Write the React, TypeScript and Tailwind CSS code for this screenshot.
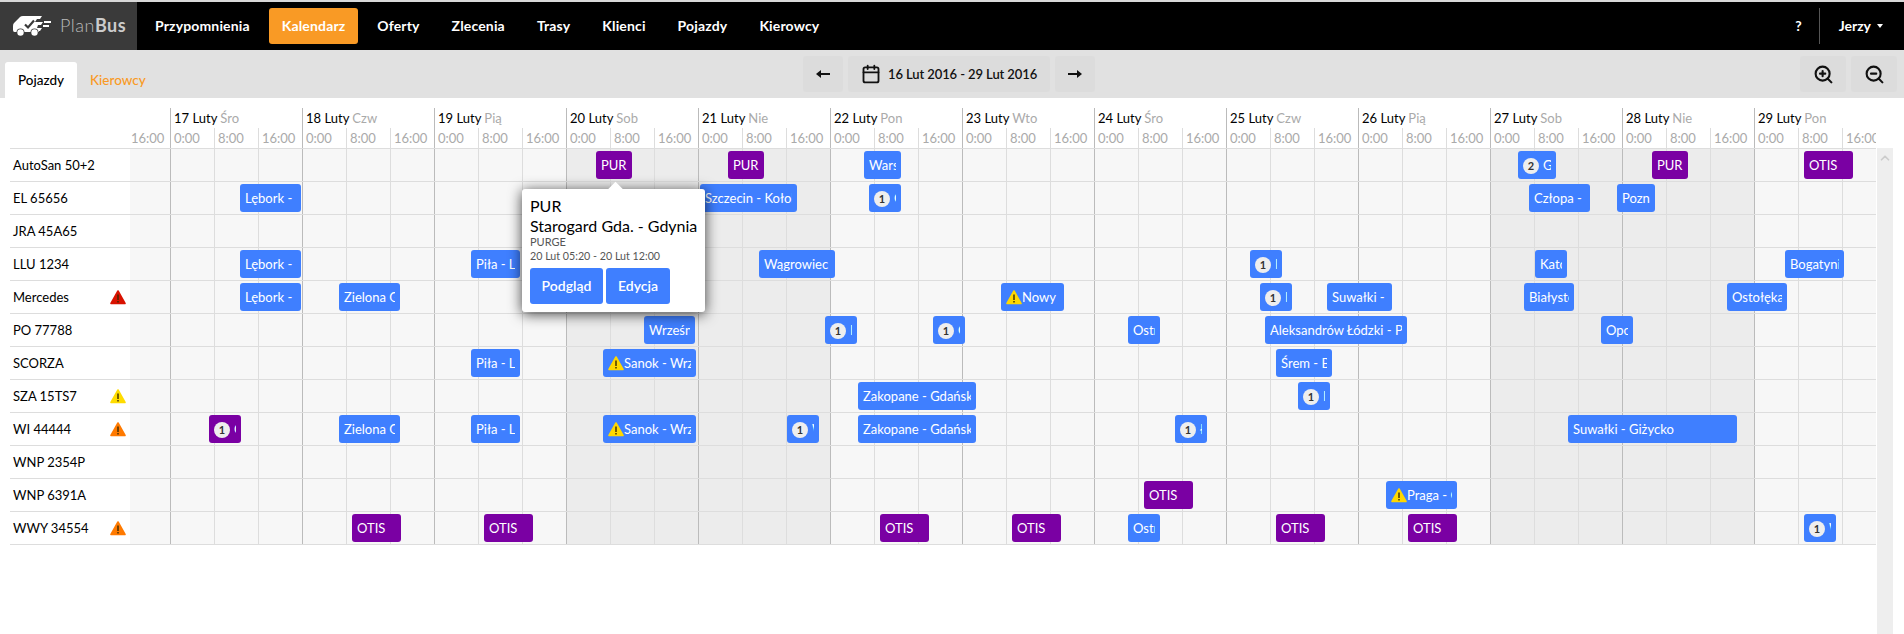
import React from 'react';
import { Calendar, ChevronUp, ZoomIn, ZoomOut } from 'lucide-react';

type Bar = {
    x: number;
    w: number;
    label: string;
    purple?: boolean;
    badge?: number;
    warn?: boolean;
};

const TRACK_START = 130;

const navItems = ['Przypomnienia', 'Kalendarz', 'Oferty', 'Zlecenia', 'Trasy', 'Klienci', 'Pojazdy', 'Kierowcy'];

const days = [
    { day: 17, name: 'Śro' },
    { day: 18, name: 'Czw' },
    { day: 19, name: 'Pią' },
    { day: 20, name: 'Sob', weekend: true },
    { day: 21, name: 'Nie', weekend: true },
    { day: 22, name: 'Pon' },
    { day: 23, name: 'Wto' },
    { day: 24, name: 'Śro' },
    { day: 25, name: 'Czw' },
    { day: 26, name: 'Pią' },
    { day: 27, name: 'Sob', weekend: true },
    { day: 28, name: 'Nie', weekend: true },
    { day: 29, name: 'Pon' },
];

const otis = (x: number): Bar => ({ x, w: 49, label: 'OTIS', purple: true });
const pur = (x: number): Bar => ({ x, w: 36, label: 'PUR', purple: true });

const vehicles: { name: string; alert?: string; bars: Bar[] }[] = [
    {
        name: 'AutoSan 50+2',
        bars: [
            pur(596),
            pur(728),
            { x: 864, w: 37, label: 'Warszawa' },
            { x: 1518, w: 38, label: 'Gdynia', badge: 2 },
            pur(1652),
            otis(1804),
        ],
    },
    {
        name: 'EL 65656',
        bars: [
            { x: 240, w: 61, label: 'Lębork - Poznań' },
            { x: 700, w: 97, label: 'Szczecin - Kołobrzeg' },
            { x: 869, w: 32, label: 'Opole', badge: 1 },
            { x: 1529, w: 61, label: 'Człopa - Gniezno' },
            { x: 1617, w: 38, label: 'Poznań' },
        ],
    },
    { name: 'JRA 45A65', bars: [] },
    {
        name: 'LLU 1234',
        bars: [
            { x: 240, w: 61, label: 'Lębork - Poznań' },
            { x: 471, w: 49, label: 'Piła - Lublin' },
            { x: 759, w: 76, label: 'Wągrowiec' },
            { x: 1250, w: 32, label: 'Poznań', badge: 1 },
            { x: 1535, w: 32, label: 'Katowice' },
            { x: 1785, w: 59, label: 'Bogatynia' },
        ],
    },
    {
        name: 'Mercedes',
        alert: '#d91200',
        bars: [
            { x: 240, w: 61, label: 'Lębork - Poznań' },
            { x: 339, w: 61, label: 'Zielona Góra' },
            { x: 1001, w: 63, label: 'Nowy', warn: true },
            { x: 1260, w: 32, label: 'Poznań', badge: 1 },
            { x: 1327, w: 65, label: 'Suwałki - Giżycko' },
            { x: 1524, w: 50, label: 'Białystok' },
            { x: 1727, w: 60, label: 'Ostołęka' },
        ],
    },
    {
        name: 'PO 77788',
        bars: [
            { x: 644, w: 51, label: 'Września' },
            { x: 825, w: 32, label: 'Poznań', badge: 1 },
            { x: 933, w: 32, label: 'Opole', badge: 1 },
            { x: 1128, w: 32, label: 'Ostrów' },
            { x: 1265, w: 142, label: 'Aleksandrów Łódzki - Płock' },
            { x: 1601, w: 32, label: 'Opole' },
        ],
    },
    {
        name: 'SCORZA',
        bars: [
            { x: 471, w: 49, label: 'Piła - Lublin' },
            { x: 603, w: 93, label: 'Sanok - Wrzeszcz', warn: true },
            { x: 1276, w: 56, label: 'Śrem - Bytom' },
        ],
    },
    {
        name: 'SZA 15TS7',
        alert: '#ffdc00',
        bars: [
            { x: 858, w: 118, label: 'Zakopane - Gdańsk' },
            { x: 1298, w: 32, label: 'Legnica', badge: 1 },
        ],
    },
    {
        name: 'WI 44444',
        alert: '#ff7a00',
        bars: [
            { x: 209, w: 32, label: 'Opole', badge: 1, purple: true },
            { x: 339, w: 61, label: 'Zielona Góra' },
            { x: 471, w: 49, label: 'Piła - Lublin' },
            { x: 603, w: 93, label: 'Sanok - Wrzeszcz', warn: true },
            { x: 787, w: 32, label: 'Wrocław', badge: 1 },
            { x: 858, w: 118, label: 'Zakopane - Gdańsk' },
            { x: 1175, w: 32, label: 'Łódź', badge: 1 },
            { x: 1568, w: 169, label: 'Suwałki - Giżycko' },
        ],
    },
    { name: 'WNP 2354P', bars: [] },
    {
        name: 'WNP 6391A',
        bars: [otis(1144), { x: 1386, w: 71, label: 'Praga - Gdańsk', warn: true }],
    },
    {
        name: 'WWY 34554',
        alert: '#ff7a00',
        bars: [
            otis(352),
            otis(484),
            otis(880),
            otis(1012),
            { x: 1128, w: 32, label: 'Ostrów' },
            otis(1276),
            otis(1408),
            { x: 1804, w: 32, label: 'Wrocław', badge: 1 },
        ],
    },
];

const WarnIcon: React.FC<{ color: string }> = ({ color }) => (
    <svg width="16" height="15" viewBox="0 0 16 15" className="shrink-0">
        <path d="M8 1 L15 13.5 H1 Z" fill={color} stroke={color} strokeWidth="1.6" strokeLinejoin="round" />
        <rect x="7.3" y="4.5" width="1.4" height="5.5" fill="#3a2a00" />
        <rect x="7.3" y="11" width="1.4" height="1.5" fill="#3a2a00" />
    </svg>
);

const Logo: React.FC = () => (
    <svg width="38" height="21" viewBox="0 0 38 21" fill="#fff">
        <path d="M7 1 Q8 0 10 0 H29 L27 3 H24 L22 6 H30 L28 9 H25 L24 12 H29 L27 15 H26 V16 H1.5 Q0 16 0 14 V10 Q0 8 1 7 Z" />
        <circle cx="7.5" cy="16.5" r="4" fill="#3a3a3a" />
        <circle cx="21.5" cy="16.5" r="4" fill="#3a3a3a" />
        <circle cx="7.5" cy="16.5" r="3.2" />
        <circle cx="21.5" cy="16.5" r="3.2" />
        <rect x="31" y="5" width="7" height="2" />
        <rect x="30" y="9" width="6" height="2" />
        <path d="M12 8.5 L15 11.5 L21 4.5" fill="none" stroke="#3a3a3a" strokeWidth="2.2" />
    </svg>
);

const Arrow: React.FC<{ flip?: boolean }> = ({ flip }) => (
    <svg width="14" height="10" viewBox="0 0 14 10" className={flip ? 'rotate-180' : ''}>
        <path d="M0 5 L5 1 V4 H14 V6 H5 V9 Z" fill="#111" />
    </svg>
);

const EventBar: React.FC<{ bar: Bar }> = ({ bar }) => (
    <div
        className={`absolute top-[2px] h-7 rounded-[3px] px-[5px] flex items-center text-white text-[13px] ${bar.purple ? 'bg-[#7a00a3]' : 'bg-[#3f7fff]'}`}
        style={{ left: bar.x - TRACK_START, width: bar.w }}
    >
        <div className="flex items-center w-full overflow-hidden whitespace-nowrap">
            {bar.badge && (
                <span className="shrink-0 w-4 h-4 mt-[1px] mr-1 rounded-full bg-[#eeeeee] text-[#333] text-[11px] font-bold leading-4 text-center">
                    {bar.badge}
                </span>
            )}
            {bar.warn && <WarnIcon color="#ffd800" />}
            <span>{bar.label}</span>
        </div>
    </div>
);

const TrackCells: React.FC = () => (
    <>
        <div className="w-10 shrink-0 bg-[#f7f7f7]" />
        {days.map(d => (
            <div key={d.day} className={`w-[132px] shrink-0 flex ${d.weekend ? 'bg-[#ececec]' : 'bg-[#f7f7f7]'}`}>
                <div className="w-11 border-l border-[#bbbbbb]" />
                <div className="w-11 border-l border-[#dddddd]" />
                <div className="w-11 border-l border-[#dddddd]" />
            </div>
        ))}
    </>
);

export default function App() {
    return (
        <div className="relative h-[634px] w-[1904px] overflow-hidden bg-white text-sm text-[#111] font-['Lato','Open_Sans',sans-serif]">
            <div className="h-[2px] bg-[#d8d8d8]" />

            {/* top nav */}
            <div className="h-12 bg-black flex items-center text-white font-bold">
                <div className="w-[137px] h-12 bg-[#3a3a3a] flex items-center pl-[13px] gap-[9px]">
                    <Logo />
                    <span className="text-[18px] text-[#bbbbbb] font-light tracking-[0.5px]">
                        Plan<span className="font-bold text-[#cccccc]">Bus</span>
                    </span>
                </div>
                <nav className="flex items-center gap-[6px] ml-[5px] tracking-[0.15px]">
                    {navItems.map(item => (
                        <a
                            key={item}
                            className={`h-9 px-[13px] rounded-[3px] leading-9 ${item === 'Kalendarz' ? 'bg-[#f99a25]' : ''}`}
                        >
                            {item}
                        </a>
                    ))}
                </nav>
                <div className="ml-auto flex items-center">
                    <span className="mr-[17px]">?</span>
                    <div className="h-9 w-px bg-[#555555]" />
                    <span className="ml-[19px]">Jerzy</span>
                    <span className="ml-[6px] mr-[21px] border-x-[3px] border-t-4 border-x-transparent border-t-white" />
                </div>
            </div>

            {/* toolbar */}
            <div className="h-12 bg-[#e1e1e1] flex">
                <div className="w-[803px] pl-[5px] flex items-end">
                    <div className="h-9 w-[72px] bg-white rounded-t-[3px] text-center leading-9 font-medium text-[13.5px] text-black">Pojazdy</div>
                    <div className="h-9 pl-[13px] leading-9 font-medium text-[13.5px] text-[#f99a25]">Kierowcy</div>
                </div>
                <div className="flex gap-[5px] pt-[6px]">
                    <button className="w-10 h-9 rounded-[3px] bg-[#dcdcdc] flex items-center justify-center"><Arrow /></button>
                    <div className="w-[202px] h-9 rounded-[3px] bg-[#dcdcdc] flex items-center pl-[13px] gap-[7px] font-semibold text-[13px] tracking-[-0.1px] text-[#111] whitespace-nowrap">
                        <Calendar size={20} strokeWidth={2.2} className="shrink-0" />
                        16 Lut 2016 - 29 Lut 2016
                    </div>
                    <button className="w-10 h-9 rounded-[3px] bg-[#dcdcdc] flex items-center justify-center"><Arrow flip /></button>
                </div>
                <div className="ml-auto mr-[7px] flex gap-[5px] pt-[6px]">
                    <button className="w-[46px] h-9 rounded-[3px] bg-[#dcdcdc] flex items-center justify-center"><ZoomIn size={21} strokeWidth={2.4} /></button>
                    <button className="w-[46px] h-9 rounded-[3px] bg-[#dcdcdc] flex items-center justify-center"><ZoomOut size={21} strokeWidth={2.4} /></button>
                </div>
            </div>

            {/* date header */}
            <div className="ml-[10px] w-[1866px] h-[51px] border-b border-[#dddddd] flex leading-5 text-[13px]">
                <div className="w-[120px] shrink-0" />
                <div className="flex overflow-hidden">
                    <div className="w-10 shrink-0 self-end h-5 text-[#aaaaaa] pl-[1px]">16:00</div>
                    {days.map(d => (
                        <div key={d.day} className="w-[132px] shrink-0 mt-[10px] border-l border-[#bbbbbb]">
                            <div className="h-5 pl-[3px] whitespace-nowrap text-black">
                                {d.day} Luty <span className="text-[#aaaaaa]">{d.name}</span>
                            </div>
                            <div className="flex text-[#aaaaaa]">
                                <div className="w-[43px] pl-[3px]">0:00</div>
                                <div className="w-11 pl-[3px] border-l border-[#dddddd]">8:00</div>
                                <div className="w-11 pl-[3px] border-l border-[#dddddd] whitespace-nowrap">16:00</div>
                            </div>
                        </div>
                    ))}
                </div>
            </div>

            {/* vehicles + timeline */}
            <div className="flex">
                <div className="ml-[10px] w-[1866px] shrink-0">
                    {vehicles.map(v => (
                        <div key={v.name} className="flex h-[33px] border-b border-[#dddddd]">
                            <div className="w-[120px] shrink-0 pl-[3px] pr-1 pt-px flex items-center justify-between text-[13px] text-black">
                                <span>{v.name}</span>
                                {v.alert && <WarnIcon color={v.alert} />}
                            </div>
                            <div className="relative flex overflow-hidden">
                                <TrackCells />
                                {v.bars.map(b => <EventBar key={b.x} bar={b} />)}
                            </div>
                        </div>
                    ))}
                </div>
                <div className="ml-px w-4 h-[486px] -mt-px bg-[#eeeeee] flex justify-center pt-[3px]">
                    <ChevronUp size={14} strokeWidth={3} className="text-[#cccccc]" />
                </div>
            </div>

            {/* popover */}
            <div className="absolute left-[522px] top-[189px] w-[183px] h-[123px] bg-white rounded-[3px] px-2 pt-[7px] shadow-[0_2px_14px_rgba(0,0,0,0.75)]">
                <div className="absolute -top-[5px] left-[88px] w-[11px] h-[11px] rotate-45 bg-white" />
                <div className="relative text-base leading-5 text-black">PUR</div>
                <div className="text-base leading-5 text-black whitespace-nowrap">Starogard Gda. - Gdynia</div>
                <div className="text-[11px] leading-[14px] text-[#555555] -mt-px">PURGE</div>
                <div className="text-[10.7px] leading-[14px] text-[#555555] whitespace-nowrap">20 Lut 05:20 - 20 Lut 12:00</div>
                <div className="flex gap-[3px] mt-[5px] text-white font-semibold">
                    <button className="w-[73px] h-9 rounded-[3px] bg-[#3f7fff]">Podgląd</button>
                    <button className="w-16 h-9 rounded-[3px] bg-[#3f7fff]">Edycja</button>
                </div>
            </div>
        </div>
    );
}
